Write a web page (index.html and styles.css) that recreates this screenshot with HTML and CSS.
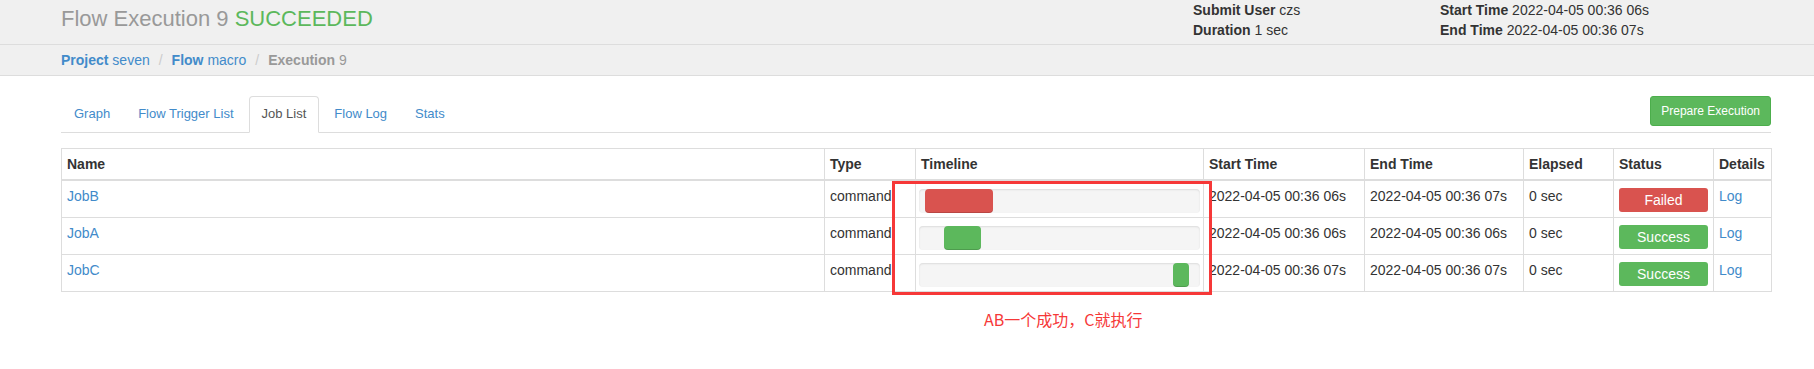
FILE: index.html
```html
<!DOCTYPE html>
<html lang="en">
<head>
    <meta charset="UTF-8">
    <meta name="viewport" content="width=device-width, initial-scale=1.0">
    <title>Flow Execution 9</title>
    <link rel="stylesheet" href="styles.css">
</head>
<body>
    <!-- Judul eksekusi -->
    <div class="page-header">
        <h1>Flow Execution 9 <span class="succeeded">SUCCEEDED</span></h1>
        <div class="header-info">
            <div class="info-col">
                <p><strong>Submit User</strong> czs</p>
                <p><strong>Duration</strong> 1 sec</p>
            </div>
            <div class="info-col">
                <p><strong>Start Time</strong> 2022-04-05 00:36 06s</p>
                <p><strong>End Time</strong> 2022-04-05 00:36 07s</p>
            </div>
        </div>
    </div>

    <!-- Breadcrumb -->
    <div class="breadcrumb-bar">
        <ul class="breadcrumb">
            <li><a href="#"><strong>Project</strong> seven</a></li>
            <li class="sep">/</li>
            <li><a href="#"><strong>Flow</strong> macro</a></li>
            <li class="sep">/</li>
            <li class="current"><strong>Execution</strong> 9</li>
        </ul>
    </div>

    <div class="content">
        <div class="tab-row">
            <ul class="nav-tabs">
                <li><a href="#">Graph</a></li>
                <li><a href="#">Flow Trigger List</a></li>
                <li class="active"><a href="#">Job List</a></li>
                <li><a href="#">Flow Log</a></li>
                <li><a href="#">Stats</a></li>
            </ul>
            <button class="btn-success">Prepare Execution</button>
        </div>

        <table class="job-table">
            <colgroup>
                <col style="width: 763px">
                <col style="width: 91px">
                <col style="width: 288px">
                <col style="width: 161px">
                <col style="width: 159px">
                <col style="width: 90px">
                <col style="width: 100px">
                <col style="width: 58px">
            </colgroup>
            <thead>
                <tr>
                    <th>Name</th>
                    <th>Type</th>
                    <th>Timeline</th>
                    <th>Start Time</th>
                    <th>End Time</th>
                    <th>Elapsed</th>
                    <th>Status</th>
                    <th>Details</th>
                </tr>
            </thead>
            <tbody>
                <tr>
                    <td><a href="#">JobB</a></td>
                    <td>command</td>
                    <td class="timeline"><div class="progress"><div class="progress-bar failed" style="margin-left: 6px; width: 68px"></div></div></td>
                    <td>2022-04-05 00:36 06s</td>
                    <td>2022-04-05 00:36 07s</td>
                    <td>0 sec</td>
                    <td><div class="label failed">Failed</div></td>
                    <td><a href="#">Log</a></td>
                </tr>
                <tr>
                    <td><a href="#">JobA</a></td>
                    <td>command</td>
                    <td class="timeline"><div class="progress"><div class="progress-bar success" style="margin-left: 25px; width: 37px"></div></div></td>
                    <td>2022-04-05 00:36 06s</td>
                    <td>2022-04-05 00:36 06s</td>
                    <td>0 sec</td>
                    <td><div class="label success">Success</div></td>
                    <td><a href="#">Log</a></td>
                </tr>
                <tr>
                    <td><a href="#">JobC</a></td>
                    <td>command</td>
                    <td class="timeline"><div class="progress"><div class="progress-bar success" style="margin-left: 254px; width: 16px"></div></div></td>
                    <td>2022-04-05 00:36 07s</td>
                    <td>2022-04-05 00:36 07s</td>
                    <td>0 sec</td>
                    <td><div class="label success">Success</div></td>
                    <td><a href="#">Log</a></td>
                </tr>
            </tbody>
        </table>
    </div>

    <!-- Catatan merah di atas screenshot -->
    <div class="note-box"></div>
    <div class="note-text">AB一个成功，C就执行</div>
</body>
</html>
```

FILE: styles.css
```css
body {
    font-family: 'Liberation Sans', Arial, sans-serif;
    font-size: 14px;
    line-height: 20px;
    color: #333;
    background-color: #fff;
    margin: 0;
    padding: 0;
}
a {
    color: #428bca;
    text-decoration: none;
}
.page-header {
    display: flex;
    height: 44px;
    padding: 0 43px 0 61px;
    background-color: #f0f0f0;
    border-bottom: 1px solid #ddd;
}
.page-header h1 {
    flex: 1;
    margin: 0;
    padding-top: 7px;
    font-size: 22px;
    line-height: 24px;
    font-weight: normal;
    color: #999;
}
.succeeded {
    color: #5cb85c;
}
.header-info {
    display: flex;
    width: 578px;
}
.info-col {
    width: 247px;
}
.info-col p {
    margin: 0;
    line-height: 20px;
}
.breadcrumb-bar {
    background-color: #f0f0f0;
    border-bottom: 1px solid #ddd;
    padding: 5px 43px 5px 61px;
}
.breadcrumb {
    display: flex;
    list-style: none;
    margin: 0;
    padding: 0;
}
.breadcrumb .sep {
    color: #ccc;
    margin: 0 9px;
}
.breadcrumb .current {
    color: #999;
}
.content {
    padding: 0 43px 0 61px;
}
.tab-row {
    display: flex;
    justify-content: space-between;
    align-items: flex-start;
    margin-top: 20px;
    border-bottom: 1px solid #ddd;
}
.nav-tabs {
    display: flex;
    list-style: none;
    margin: 0;
    padding: 0;
}
.nav-tabs li {
    margin-right: 2px;
    margin-bottom: -1px;
}
.nav-tabs a {
    display: block;
    padding: 7px 12px 8px;
    font-size: 13px;
    line-height: 20px;
    border: 1px solid transparent;
    border-radius: 4px 4px 0 0;
}
.nav-tabs .active a {
    color: #555;
    background-color: #fff;
    border-color: #ddd #ddd transparent;
}
.btn-success {
    font-family: 'Liberation Sans', Arial, sans-serif;
    font-size: 12px;
    line-height: 18px;
    padding: 5px 10px;
    color: #fff;
    background-color: #5cb85c;
    border: 1px solid #4cae4c;
    border-radius: 3px;
}
.job-table {
    width: 100%;
    margin-top: 15px;
    table-layout: fixed;
    border-collapse: collapse;
    border: 1px solid #ddd;
}
.job-table th, .job-table td {
    border: 1px solid #ddd;
    padding: 5px 5px 4px;
    text-align: left;
    vertical-align: top;
    white-space: nowrap;
}
.job-table thead th {
    padding-bottom: 5px;
    border-bottom-width: 2px;
}
.job-table td.timeline {
    padding-left: 3px;
    padding-right: 3px;
}
.progress {
    display: flex;
    height: 24px;
    margin-top: 3px;
    background-color: #f5f5f5;
    border-radius: 4px;
    box-shadow: inset 0 1px 2px rgba(0, 0, 0, 0.1);
    overflow: hidden;
}
.progress-bar {
    height: 100%;
    border-radius: 4px;
    box-shadow: inset 0 -1px 0 rgba(0, 0, 0, 0.15);
}
.progress-bar.failed {
    background-color: #d9534f;
}
.progress-bar.success {
    background-color: #5cb85c;
}
.label {
    height: 24px;
    margin-top: 2px;
    line-height: 24px;
    text-align: center;
    color: #fff;
    border-radius: 3px;
}
.label.failed {
    background-color: #d9534f;
}
.label.success {
    background-color: #5cb85c;
}
.note-box {
    position: absolute;
    left: 892px;
    top: 181px;
    width: 314px;
    height: 108px;
    border: 3px solid #f63838;
}
.note-text {
    position: absolute;
    left: 984px;
    top: 309px;
    font-family: 'Noto Sans CJK SC', sans-serif;
    font-size: 16px;
    line-height: 20px;
    color: #f63838;
}
```
